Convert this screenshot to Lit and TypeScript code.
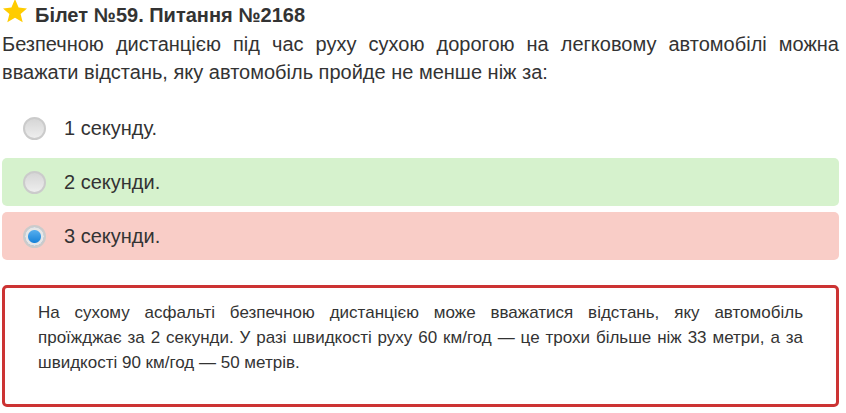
import { LitElement, html, css } from "lit";
import { customElement, property, state } from "lit/decorators.js";
import { classMap } from "lit/directives/class-map.js";

interface Answer {
  id: string;
  text: string;
  mark: "" | "correct" | "wrong";
}

@customElement("answer-list")
export class AnswerList extends LitElement {
  @property({ attribute: false }) answers: Answer[] = [];
  @property() selected = "";

  static styles = css`
    :host {
      display: block;
    }
    .list {
      display: flex;
      flex-direction: column;
      gap: 6px;
    }
    .row {
      display: flex;
      align-items: center;
      gap: 18px;
      min-height: 48px;
      box-sizing: border-box;
      padding: 0 21px;
      border-radius: 5px;
      line-height: 28px;
      cursor: pointer;
    }
    .correct {
      background: #d6f2cd;
    }
    .wrong {
      background: #f9cdc7;
    }
    .radio {
      appearance: none;
      flex: none;
      box-sizing: border-box;
      width: 23px;
      height: 23px;
      margin: 0;
      border: 2px solid #cbcbcb;
      border-radius: 50%;
      background: linear-gradient(#d6d6d6, #eeeeee);
      cursor: pointer;
    }
    .radio:checked {
      background:
        radial-gradient(circle, transparent 6px, #e6e6e6 7px),
        linear-gradient(#5fb4f0 15%, #0f7cd6 85%);
      background-origin: border-box;
      background-clip: padding-box;
    }
  `;

  render() {
    return html`
      <div class="list" role="radiogroup" aria-label="Варіанти відповіді">
        ${this.answers.map(
          (a) => html`
            <label
              class=${classMap({
                row: true,
                correct: a.mark === "correct",
                wrong: a.mark === "wrong",
              })}
            >
              <input
                class="radio"
                type="radio"
                name="answer"
                .value=${a.id}
                .checked=${a.id === this.selected}
              />
              <span>${a.text}</span>
            </label>
          `
        )}
      </div>
    `;
  }
}

@customElement("app-root")
export class AppRoot extends LitElement {
  @state() private answers: Answer[] = [
    { id: "1", text: "1 секунду.", mark: "" },
    { id: "2", text: "2 секунди.", mark: "correct" },
    { id: "3", text: "3 секунди.", mark: "wrong" },
  ];

  private note = [
    "На сухому асфальті безпечною дистанцією може вважатися відстань, яку автомобіль",
    "проїжджає за 2 секунди. У разі швидкості руху 60 км/год — це трохи більше ніж 33 метри, а за",
    "швидкості 90 км/год — 50 метрів.",
  ];

  static styles = css`
    :host {
      display: block;
      padding: 0 7px 6px 2px;
      background: #fff;
      color: #333;
      font-family: "Liberation Sans", Arial, sans-serif;
      font-size: 20px;
      line-height: 28px;
    }
    .heading {
      display: flex;
      gap: 7px;
      margin: 0;
      font-size: 20px;
      font-weight: bold;
      line-height: 30px;
    }
    .star {
      flex: none;
      width: 26px;
      height: 24px;
    }
    .question {
      margin: 0 0 18px;
      text-align: justify;
    }
    .note {
      margin-top: 25px;
      padding: 12px 33px 29px;
      border: 3px solid #cc3333;
      border-radius: 5px;
      font-size: 17px;
      line-height: 25px;
      text-align: justify;
    }
    .note-text {
      margin: 0;
    }
    .line {
      display: block;
    }
    .line:not(:last-child) {
      text-align-last: justify;
    }
  `;

  render() {
    return html`
      <main>
        <h1 class="heading">
          <svg class="star" viewBox="0 0 26 24" aria-hidden="true">
            <path
              fill="#ffcc00"
              d="M13 -1 L16.6 7.6 L25 8.4 L18.6 14 L20.7 22.2 L13 17.8 L5.3 22.2 L7.4 14 L1 8.4 L9.4 7.6 Z"
            />
          </svg>
          <span>Білет №59. Питання №2168</span>
        </h1>
        <p class="question">
          Безпечною дистанцією під час руху сухою дорогою на легковому
          автомобілі можна вважати відстань, яку автомобіль пройде не менше ніж
          за:
        </p>
        <answer-list .answers=${this.answers} selected="3"></answer-list>
        <section class="note">
          <p class="note-text">
            ${this.note.map((line) => html`<span class="line">${line} </span>`)}
          </p>
        </section>
      </main>
    `;
  }
}
